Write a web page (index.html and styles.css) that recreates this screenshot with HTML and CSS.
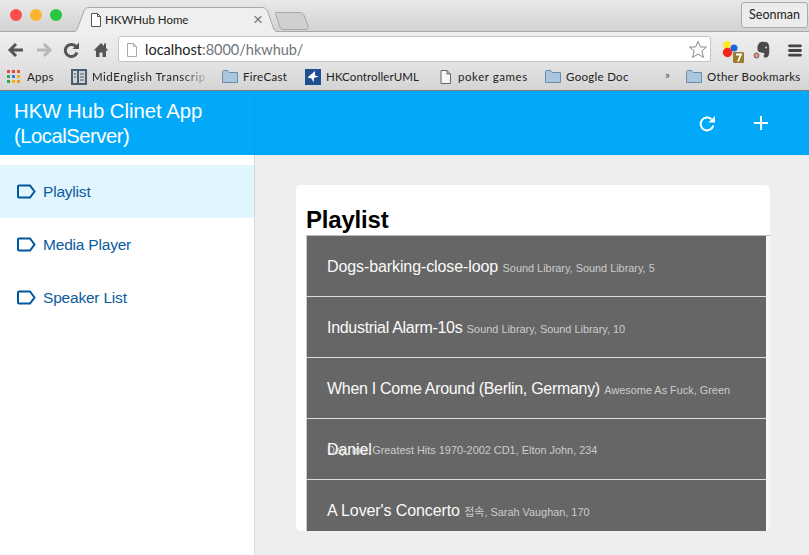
FILE: index.html
```html
<!DOCTYPE html>
<html lang="en">
<head>
<meta charset="utf-8">
<title>HKWHub Home</title>
<link rel="stylesheet" href="styles.css">
</head>
<body>
<div class="chrome">
  <div class="tabstrip">
    <div class="lights"><span class="light red"></span><span class="light yellow"></span><span class="light green"></span></div>
    <div class="tab">
      <svg class="tab-bg" width="208" height="33" viewBox="0 0 208 33"><path d="M0 31.500H2C4 31.500 5 30 6 27L12 11C13 9 14 7.500 17 7.500H190C193 7.500 194.500 9 195.500 11L201 27C202 30 203 31.500 205 31.500H208V33H0Z" fill="#efefef" stroke="none"/><path d="M0 31.500H2C4 31.500 5 30 6 27L12 11C13 9 14 7.500 17 7.500H190C193 7.500 194.500 9 195.500 11L201 27C202 30 203 31.500 205 31.500H208" fill="none" stroke="#a8a8a8"/></svg>
      <svg class="page-icon" width="12" height="14" viewBox="0 0 12 14"><path d="M1.500.5H7.500L10.500 3.500V13.500H1.500Z M7.500.5V3.500H10.500" fill="#fff" stroke="#555"/></svg>
      <span class="tab-title">HKWHub Home</span>
      <span class="tab-close">×</span>
    </div>
    <svg class="newtab" width="34" height="20" viewBox="0 0 34 20"><path d="M1 1.500H25C27 1.500 28 2.500 29 4L33 15C33.500 17 32.500 18.500 31 18.500H8C6 18.500 5.500 17.500 5 16L1 4C.5 2.500 0 1.500 1 1.500Z" fill="#d0d0d0" stroke="#a9a9a9"/></svg>
    <div class="user">Seonman</div>
  </div>
  <div class="toolbar">
    <svg class="tool" width="18" height="16" viewBox="0 0 18 16"><path d="M16 8H4M9 2L3 8L9 14" fill="none" stroke="#555" stroke-width="3"/></svg>
    <svg class="tool" width="18" height="16" viewBox="0 0 18 16"><path d="M2 8H14M9 2L15 8L9 14" fill="none" stroke="#b8b8b8" stroke-width="3"/></svg>
    <svg class="tool" width="18" height="16" viewBox="0 0 18 16"><path d="M14 10.500A6 6 0 1 1 12.800 4.500" fill="none" stroke="#555" stroke-width="3"/><path d="M9.500 7H16V.5Z" fill="#555"/></svg>
    <svg class="tool home" width="16" height="16" viewBox="0 0 16 16"><path d="M8 1L0.500 8.500H3V15H6.500V10.500H9.500V15H13V8.500H15.500L13 6V1.500H11V4Z" fill="#555"/></svg>
    <div class="omnibox">
      <svg class="page-icon-url" width="12" height="14" viewBox="0 0 12 14"><path d="M1.500.5H7.500L10.500 3.500V13.500H1.500Z M7.500.5V3.500H10.500" fill="#fff" stroke="#aaa"/></svg>
      <span class="url-host">localhost</span><span class="url-rest">:8000/hkwhub/</span>
      <svg class="star" width="20" height="19" viewBox="0 0 20 19"><path d="M10 1.500L12.500 7H18.500L13.800 11L15.500 17.500L10 14L4.500 17.500L6.200 11L1.500 7H7.500Z" fill="#fff" stroke="#888"/></svg>
    </div>
    <svg class="ext ext-color" width="24" height="24" viewBox="0 0 24 24"><circle cx="5" cy="5" r="4" fill="#ffe62e"/><circle cx="12" cy="8" r="3.500" fill="#1a66e0"/><circle cx="5.500" cy="12.500" r="4.700" fill="#f4261a"/><rect x="11" y="12" width="11" height="11" rx="1" fill="#9a7c2c"/><path d="M14 14.500H19L16 21.500" fill="none" stroke="#fff" stroke-width="1.800"/></svg>
    <svg class="ext ext-note" width="18" height="18" viewBox="0 0 18 18"><path d="M6.500 1.500C8 .5 12 .5 14.500 1.500C16.500 3 16.500 9 16 13C15.500 16 13.500 17 11.500 16.500C10 16 10.500 13.500 12 13C11 12 9.500 11.500 8 11.500C6 11.500 4.500 10 4.500 8.500V5Z" fill="#4a4a4a"/><circle cx="13" cy="6.500" r="1" fill="#ddd"/><circle cx="3.500" cy="14.500" r="2.500" fill="#f28a78" stroke="#666"/></svg>
    <svg class="menu" width="14" height="13" viewBox="0 0 14 13"><path d="M1.500 1.800H12.500M1.500 6.500H12.500M1.500 11.200H12.500" stroke="#444" stroke-width="2.800" stroke-linecap="round"/></svg>
  </div>
  <div class="bookmarks">
    <span class="bm bm-apps"><span class="apps-grid"><i class="c1"></i><i class="c2"></i><i class="c3"></i><i class="c4"></i><i class="c5"></i><i class="c6"></i><i class="c7"></i><i class="c8"></i><i class="c9"></i></span>Apps</span>
    <span class="bm bm-mid"><svg width="16" height="16" viewBox="0 0 16 16"><rect width="16" height="16" fill="#4e5d6c"/><rect x="2" y="2" width="4" height="12" fill="#cdd3d8"/><rect x="8" y="2" width="6" height="12" fill="#cdd3d8"/><path d="M9 5H13M9 8H13M9 11H13M3 5H5M3 8H5" stroke="#4e5d6c"/></svg><span class="fade">MidEnglish Transcrip</span></span>
    <span class="bm bm-fire"><svg class="folder" width="16" height="13" viewBox="0 0 16 13"><path d="M.5 12.500V1.500C.5 1 1 .5 1.500 .5H5.500L7 2.500H15.500V12.500Z" fill="#a9c6de" stroke="#6c8ca8"/></svg>FireCast</span>
    <span class="bm bm-hk"><svg width="16" height="16" viewBox="0 0 16 16"><rect width="16" height="16" fill="#1d4f91"/><path d="M2.500 8.500L10 2V6.500L13.500 7.500L9 9L8.500 13.500L6.500 9.500Z" fill="#fff"/></svg>HKControllerUML</span>
    <span class="bm bm-poker"><svg width="11" height="14" viewBox="0 0 11 14"><path d="M1 .5H7L10.500 4V13.500H1Z M7 .5V4H10.500" fill="#f7f7f7" stroke="#666"/></svg>poker games</span>
    <span class="bm bm-doc"><svg class="folder" width="16" height="13" viewBox="0 0 16 13"><path d="M.5 12.500V1.500C.5 1 1 .5 1.500 .5H5.500L7 2.500H15.500V12.500Z" fill="#a9c6de" stroke="#6c8ca8"/></svg>Google Doc</span>
    <span class="bm-more">»</span>
    <span class="bm bm-other"><svg class="folder" width="16" height="13" viewBox="0 0 16 13"><path d="M.5 12.500V1.500C.5 1 1 .5 1.500 .5H5.500L7 2.500H15.500V12.500Z" fill="#a9c6de" stroke="#6c8ca8"/></svg>Other Bookmarks</span>
  </div>
</div>
<div class="app">
  <aside class="sidebar">
    <header class="brand">HKW Hub Clinet App <span class="brand-sub">(LocalServer)</span></header>
    <nav class="nav">
      <a class="nav-item active"><svg class="tag" width="20" height="15" viewBox="0 0 20 15"><path d="M2 1.500H13L17.500 7.500L13 13.500H2C1.400 13.500 1 13.100 1 12.500V2.500C1 1.900 1.400 1.500 2 1.500Z" fill="none" stroke="#01579b" stroke-width="2"/></svg>Playlist</a>
      <a class="nav-item"><svg class="tag" width="20" height="15" viewBox="0 0 20 15"><path d="M2 1.500H13L17.500 7.500L13 13.500H2C1.400 13.500 1 13.100 1 12.500V2.500C1 1.900 1.400 1.500 2 1.500Z" fill="none" stroke="#01579b" stroke-width="2"/></svg>Media Player</a>
      <a class="nav-item"><svg class="tag" width="20" height="15" viewBox="0 0 20 15"><path d="M2 1.500H13L17.500 7.500L13 13.500H2C1.400 13.500 1 13.100 1 12.500V2.500C1 1.900 1.400 1.500 2 1.500Z" fill="none" stroke="#01579b" stroke-width="2"/></svg>Speaker List</a>
    </nav>
  </aside>
  <main class="main">
    <header class="appbar">
      <svg class="action" width="16" height="17" viewBox="0 0 16 17"><path d="M14.300 10.500A6.400 6.400 0 1 1 12.500 4.300" fill="none" stroke="#fff" stroke-width="2"/><path d="M9.500 7.500H16V1Z" fill="#fff"/></svg>
      <svg class="action" width="14" height="14" viewBox="0 0 14 14"><path d="M7 0V14M0 7H14" stroke="#fff" stroke-width="2"/></svg>
    </header>
    <section class="content">
      <div class="card">
        <h2 class="card-title">Playlist</h2>
        <ul class="list">
          <li class="row"><span class="song">Dogs-barking-close-loop</span> <small>Sound Library, Sound Library, 5</small></li>
          <li class="row"><span class="song song-tight">Industrial Alarm-10s</span> <small>Sound Library, Sound Library, 10</small></li>
          <li class="row"><span class="song song-tight">When I Come Around (Berlin, Germany)</span> <small>Awesome As Fuck, Green</small></li>
          <li class="row"><span class="song song-abs">Daniel</span><small>Day, Inc. Greatest Hits 1970-2002 CD1, Elton John, 234</small></li>
          <li class="row"><span class="song">A Lover's Concerto</span> <small>접속, Sarah Vaughan, 170</small></li>
        </ul>
      </div>
    </section>
  </main>
</div>
</body>
</html>
```
FILE: styles.css
```css
* { box-sizing: border-box; }
html, body { margin: 0; height: 100%; overflow: hidden; }
body { width: 809px; height: 555px; display: flex; flex-direction: column; font-family: "Liberation Sans", Arial, sans-serif; background: #eee; }

.chrome { flex: none; height: 91px; background: linear-gradient(#ececec, #d6d6d6); border-bottom: 1px solid #7d7d7d; }
.tabstrip { height: 32px; display: flex; align-items: flex-start; position: relative; border-bottom: 1px solid #a8a8a8; background: linear-gradient(#e9e9e9, #d2d2d2); }
.lights { display: flex; gap: 8px; padding: 9px 0 0 10px; }
.light { width: 12px; height: 12px; border-radius: 50%; }
.red { background: #fc4f4c; }
.yellow { background: #fdb32f; }
.green { background: #2ac740; }
.tab { position: absolute; left: 72px; top: 0; width: 208px; height: 33px; }
.tab-bg { position: absolute; left: 0; top: 0; }
.page-icon { position: absolute; left: 18px; top: 13px; }
.tab-title { position: absolute; left: 33px; top: 13px; font-family: "Lato", sans-serif; font-size: 11.500px; color: #222; }
.tab-close { position: absolute; left: 181px; top: 10px; font-size: 17px; color: #777; line-height: 20px; }
.newtab { position: absolute; left: 275px; top: 11px; }
.user { position: absolute; right: 1px; top: 2px; width: 67px; height: 26px; border: 1px solid #aaa; border-radius: 3px; background: #ececec; color: #222; font-family: "Lato", sans-serif; font-size: 12.500px; line-height: 24px; text-align: center; }

.toolbar { height: 33px; display: flex; align-items: center; padding: 3px 0 0 7px; background: linear-gradient(#efefef, #e2e2e2); }
.tool { margin-right: 10px; flex: none; }
.home { margin: 0 9px 0 2px; }
.omnibox { width: 593px; height: 26px; margin-bottom: 2px; flex: none; display: flex; align-items: center; background: #fff; border: 1px solid #c4c4c4; border-radius: 3px; padding: 1px 0 0 7px; font-family: "Lato", sans-serif; font-size: 14.500px; position: relative; }
.page-icon-url { margin-right: 7px; }
.url-host { color: #222; }
.url-rest { color: #70757a; }
.star { position: absolute; right: 2px; top: 3px; }
.ext { flex: none; }
.ext-color { margin: 4px 0 0 11px; }
.ext-note { margin-left: 7px; }
.menu { margin-left: 17px; flex: none; }

.bookmarks { height: 25px; position: relative; font-family: "Lato", sans-serif; font-size: 11.500px; letter-spacing: .3px; color: #222; background: linear-gradient(#e2e2e2, #d4d4d4); }
.bm { position: absolute; top: 3px; height: 17px; display: flex; align-items: center; gap: 5px; white-space: nowrap; }
.bm-apps { left: 7px; gap: 7px; }
.bm-mid { left: 71px; }
.bm-fire { left: 222px; }
.bm-hk { left: 305px; letter-spacing: .1px; }
.bm-poker { left: 440px; gap: 7px; letter-spacing: .55px; }
.bm-doc { left: 545px; }
.bm-more { position: absolute; left: 665px; top: 3px; color: #555; }
.bm-other { left: 686px; }
.fade { width: 113px; overflow: hidden; letter-spacing: .5px; -webkit-mask-image: linear-gradient(90deg, #000 80%, rgba(0,0,0,.2)); mask-image: linear-gradient(90deg, #000 80%, rgba(0,0,0,.2)); }
.apps-grid { display: grid; grid-template-columns: repeat(3, 3px); gap: 2px; width: 13px; }
.apps-grid i { display: block; height: 3px; }
.c1 { background: #e8453c; } .c2 { background: #e8453c; } .c3 { background: #ee5a2c; }
.c4 { background: #2fa85a; } .c5 { background: #3b78e7; } .c6 { background: #f4b400; }
.c7 { background: #2fa85a; } .c8 { background: #f4b400; } .c9 { background: #f09a20; }

.app { flex: 1; display: flex; min-height: 0; }
.sidebar { flex: none; width: 255px; background: #fff; border-right: 1px solid #d9d9d9; }
.brand { height: 64px; padding: 8px 14px 0; background: #03a9f9; color: #fff; font-size: 20.300px; line-height: 25px; border-right: 1px solid #0aa0e8; margin-right: -1px; }
.brand-sub { letter-spacing: -.5px; }
.nav { padding-top: 10px; }
.nav-item { height: 53px; display: flex; align-items: center; gap: 6px; padding: 0 0 0 17px; color: #0a5c9e; font-size: 15.500px; letter-spacing: -.2px; }
.active { background: #e1f5fe; }
.tag { flex: none; }

.main { flex: 1; min-width: 0; display: flex; flex-direction: column; }
.appbar { height: 64px; flex: none; display: flex; align-items: center; justify-content: flex-end; background: #03a9f9; padding: 0 41px 0 0; gap: 39px; }
.content { flex: 1; padding: 30px 39px 0 41px; min-height: 0; }
.card { height: 346px; background: #fff; border-radius: 5px; padding-top: 20px; overflow: hidden; }
.card-title { margin: 0 0 0 10px; font-size: 24px; line-height: 30px; font-weight: 700; color: #000; letter-spacing: -.2px; }
.list { list-style: none; margin: 0 0 0 10px; padding: 0 4px 0 0; border-top: 1px solid #bdbdbd; border-left: 1px solid #ccc; background: #f6f6f6; }
.row { height: 61px; padding: 21px 0 0 20px; background: #666; border-bottom: 1px solid #ddd; color: #fafafa; white-space: nowrap; position: relative; font-family: "Liberation Sans", "Noto Sans CJK KR", sans-serif; }
.song { font-size: 16px; line-height: 20px; letter-spacing: -.1px; }
.song-tight { letter-spacing: -.3px; }
.row small { font-size: 10.900px; color: #ccc; }
.song-abs { position: absolute; left: 20px; top: 21px; }
```
